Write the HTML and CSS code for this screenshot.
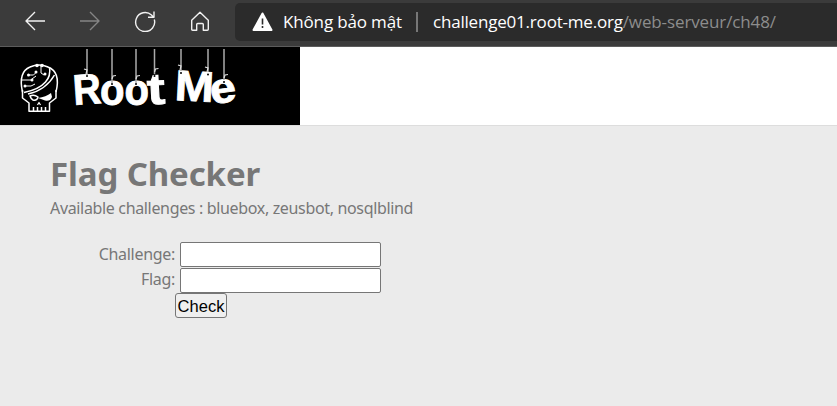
FILE: index.html
```html
<!DOCTYPE html>
<html lang="vi">
<head>
<meta charset="utf-8">
<title>Flag Checker</title>
<link rel="stylesheet" href="styles.css">
</head>
<body>
<header class="toolbar">
  <nav class="nav">
    <svg class="icon" viewBox="0 0 22 22"><path d="M21 11H2M11 2L2 11l9 9"/></svg>
    <svg class="icon disabled" viewBox="0 0 22 22"><path d="M1 11h19M11 2l9 9-9 9"/></svg>
    <svg class="icon" viewBox="0 0 22 22"><path d="M20.300 9.500A9.500 9.500 0 1 1 17.500 5l2 2.300M20 1.500v5.800h-6"/></svg>
    <svg class="icon" viewBox="0 0 22 22"><path d="M2.700 10.200 11 2.300l8.300 7.900v9q0 1-1 1h-4v-5.700q0-1-1-1H8.700q-1 0-1 1v5.700h-4q-1 0-1-1z"/></svg>
  </nav>
  <div class="address">
    <svg class="warning" viewBox="0 0 21 20"><path d="M10.500 1.500 19.500 18h-18z" fill="#fff" stroke="#fff" stroke-width="2" stroke-linejoin="round"/><path d="M10.500 6.500v6M10.500 14v2" stroke="#2b2b2b" stroke-width="1.600"/></svg>
    <span class="security">Không bảo mật</span>
    <span class="divider"></span>
    <span class="url">challenge01.root-me.org<span class="path">/web-serveur/ch48/</span></span>
  </div>
</header>
<div class="banner">
  <svg class="logo" viewBox="0 47 300 78">
    <g fill="none" stroke="#fff" stroke-width="1.500" stroke-linejoin="round">
      <path d="M22.500 92Q18 72 30 67q9-4 18 0Q61 72 56 92"/>
      <path d="M22.500 90v8l6.500 5v8.300h20.500V103l6.500-5v-8M33.500 107v4M37.500 107v4M41.500 107v4M45.500 107v4"/>
      <path d="M24 92.500q15-3 21.500-10.500Q51 76 49.500 67M28 94q18-4 26.500-19" />
      <path d="M30 96q4-2 8 1-1 4-5 3-2-1-3-4z"/>
      <path d="M28.500 75h5l3-3M22 80h10M25 86h6l4-2M41 65v8l3 2M36 76l-4 3" stroke-width="1"/>
      <path d="m37.500 105 1.500-2.500 1.500 2.500" stroke-width="1.200"/>
    </g>
    <path d="M38 98q8-1 13-5l1 4q-2 5-7 3.500L41 99z" fill="#fff"/>
    <g fill="#fff"><circle cx="28.500" cy="75" r="1.500"/><circle cx="36" cy="72" r="1.500"/><circle cx="32" cy="80" r="1.500"/><circle cx="25" cy="86" r="1.500"/><circle cx="45" cy="74" r="1.500"/><circle cx="37" cy="65.500" r="1.800"/><circle cx="42" cy="65.500" r="1.800"/></g>
    <g class="letters">
      <text x="73" y="104" font-size="43" textLength="28" lengthAdjust="spacingAndGlyphs" transform="rotate(-4 87 90)">R</text>
      <text x="100" y="104.500" font-size="43.500" textLength="49" lengthAdjust="spacingAndGlyphs">oo</text>
      <text x="147" y="104" font-size="44" textLength="18" lengthAdjust="spacingAndGlyphs" transform="rotate(-3 155 90)">t</text>
      <text x="175" y="101" font-size="43" textLength="39" lengthAdjust="spacingAndGlyphs" transform="rotate(3 194 86)">M</text>
      <text x="210" y="102.500" font-size="42.500" textLength="26" lengthAdjust="spacingAndGlyphs" transform="rotate(-8 223 91)">e</text>
    </g>
    <path d="M87 49v26M112 49v34M136 49v34M154.500 49v25M181 49v22M208 49v23M224 49v31" stroke="#aaa" stroke-width="1.500"/>
    <path d="M84 69l3 1-1 4M112 79l1-3 3-.5M136 79l1-3 3-.5M154.500 72l1-3 3-.5M178 65l3 1-1 4M205 67l3 1-1 4M224 78l1-3 3-.5" fill="none" stroke="#ddd" stroke-width="1.200"/>
    <g fill="#000"><circle cx="87" cy="76" r="1"/><circle cx="112" cy="84" r="1"/><circle cx="136" cy="84" r="1"/><circle cx="154.500" cy="76" r="1"/><circle cx="181" cy="73" r="1"/><circle cx="208" cy="74.500" r="1"/><circle cx="224" cy="82" r="1"/></g>
  </svg>
</div>
<main class="content">
  <h1>Flag Checker</h1>
  <p>Available challenges : bluebox, zeusbot, nosqlblind</p>
  <form>
    <label for="challenge">Challenge:</label><input id="challenge" type="text">
    <label for="flag">Flag:</label><input id="flag" type="text">
    <button type="button">Check</button>
  </form>
</main>
</body>
</html>
```
FILE: styles.css
```css
* { box-sizing: border-box; }
body { margin: 0; height: 406px; overflow: hidden; background: #ebebeb; color: #777; font: 16px/20px "Noto Sans", sans-serif; }
.toolbar { height: 47px; display: flex; align-items: flex-start; background: #3b3b3b; border-bottom: 1px solid #5c5c5c; }
.nav { display: flex; gap: 33px; width: 235px; padding: 10px 0 0 24px; }
.icon { flex: none; width: 22px; height: 22px; fill: none; stroke: #f2f2f2; stroke-width: 1.4; stroke-linejoin: round; }
.disabled { stroke: #858585; }
.address { display: flex; align-items: center; flex: 1; height: 38px; margin-top: 3px; padding-left: 17px; background: #2b2b2b; border-radius: 5px 0 0 5px; font-family: "Open Sans", sans-serif; font-size: 17px; color: #fff; white-space: nowrap; }
.warning { width: 21px; height: 20px; }
.security { width: 119px; margin-left: 10px; letter-spacing: -0.15px; }
.divider { width: 2px; height: 20px; margin: 0 15px 0 14px; background: #777; }
.url { letter-spacing: -0.2px; }
.path { color: #8d8d8d; letter-spacing: -0.12px; }
.banner { height: 79px; background: #fff; border-bottom: 1px solid #ddd; }
.logo { display: block; width: 300px; height: 78px; background: #000; }
.letters { fill: #fff; stroke: #fff; stroke-width: .9px; font-family: "Liberation Sans", sans-serif; font-weight: bold; }
.content { padding: 27px 50px; }
h1 { margin: 0; font: bold 33px/42px "Noto Sans", sans-serif; letter-spacing: -0.1px; white-space: nowrap; }
p { margin: 3px 0 24px; letter-spacing: -0.34px; white-space: nowrap; }
form { display: grid; grid-template-columns: 125px 201px; column-gap: 5px; row-gap: 1px; }
label { text-align: right; line-height: 24px; letter-spacing: -0.3px; }
label + input + label { line-height: 22px; }
input { width: 201px; height: 25px; margin: 0; border: 1px solid #767676; border-radius: 2px; background: #fff; }
button { grid-column: 2; width: 52px; height: 25px; margin: -1px 0 0 -5px; padding: 0; border: 1px solid #767676; border-radius: 3px; background: #efefef; color: #000; font: 16.5px/20px "Liberation Sans", sans-serif; }
```
